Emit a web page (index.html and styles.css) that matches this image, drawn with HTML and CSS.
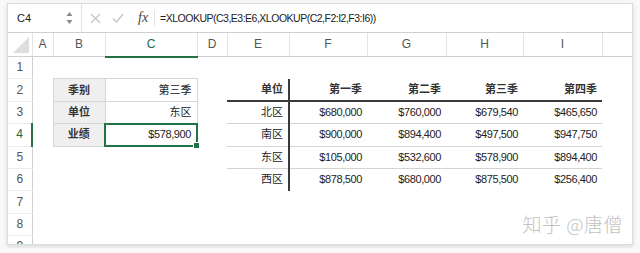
FILE: index.html
```html
<!DOCTYPE html>
<html lang="zh">
<head>
    <meta charset="UTF-8">
    <title>XLOOKUP</title>
    <link rel="stylesheet" href="styles.css">
</head>
<body>
    <div class="window">
        <!-- Formula bar -->
        <div class="formula-bar">
            <div class="name-box">
                <span>C4</span>
                <span class="stepper">
                    <svg width="7" height="14" viewBox="0 0 7 14"><path d="M3.5 1 L6.5 5 L0.5 5 Z M3.5 13 L6.5 9 L0.5 9 Z" fill="#888"/></svg>
                </span>
            </div>
            <div class="fx-buttons">
                <svg width="11" height="11" viewBox="0 0 11 11"><path d="M1 1 L10 10 M10 1 L1 10" stroke="#c4c4c4" stroke-width="1.2"/></svg>
                <svg width="12" height="10" viewBox="0 0 12 10"><path d="M1 5.5 L4.5 9 L11 1" stroke="#c4c4c4" stroke-width="1.2" fill="none"/></svg>
                <span class="fx">fx</span>
            </div>
            <div class="formula">=XLOOKUP(C3,E3:E6,XLOOKUP(C2,F2:I2,F3:I6))</div>
        </div>

        <!-- Grid -->
        <table class="sheet">
            <colgroup>
                <col style="width:24px"><col style="width:21px"><col style="width:52px"><col style="width:92px">
                <col style="width:30px"><col style="width:62px"><col style="width:78px"><col style="width:79px">
                <col style="width:77px"><col style="width:79px"><col style="width:32px">
            </colgroup>
            <thead>
                <tr>
                    <th class="corner"><span class="tri"></span></th>
                    <th>A</th><th>B</th><th class="active-col">C</th><th>D</th><th>E</th>
                    <th>F</th><th>G</th><th>H</th><th>I</th><th></th>
                </tr>
            </thead>
            <tbody>
                <tr>
                    <th>1</th>
                    <td></td><td></td><td></td><td></td><td></td><td></td><td></td><td></td><td></td><td></td>
                </tr>
                <tr>
                    <th>2</th>
                    <td></td>
                    <td class="lbl">季别</td>
                    <td class="val">第三季</td>
                    <td></td>
                    <td class="key head">单位</td>
                    <td class="head">第一季</td>
                    <td class="head">第二季</td>
                    <td class="head">第三季</td>
                    <td class="head">第四季</td>
                    <td></td>
                </tr>
                <tr>
                    <th>3</th>
                    <td></td>
                    <td class="lbl">单位</td>
                    <td class="val">东区</td>
                    <td></td>
                    <td class="key row">北区</td>
                    <td class="num row">$680,000</td>
                    <td class="num row">$760,000</td>
                    <td class="num row">$679,540</td>
                    <td class="num row">$465,650</td>
                    <td></td>
                </tr>
                <tr>
                    <th class="active-row">4</th>
                    <td></td>
                    <td class="lbl">业绩</td>
                    <td class="val num selected">$578,900<span class="handle"></span></td>
                    <td></td>
                    <td class="key row">南区</td>
                    <td class="num row">$900,000</td>
                    <td class="num row">$894,400</td>
                    <td class="num row">$497,500</td>
                    <td class="num row">$947,750</td>
                    <td></td>
                </tr>
                <tr>
                    <th>5</th>
                    <td></td><td></td><td></td><td></td>
                    <td class="key row">东区</td>
                    <td class="num row">$105,000</td>
                    <td class="num row">$532,600</td>
                    <td class="num row">$578,900</td>
                    <td class="num row">$894,400</td>
                    <td></td>
                </tr>
                <tr>
                    <th>6</th>
                    <td></td><td></td><td></td><td></td>
                    <td class="key">西区</td>
                    <td class="num">$878,500</td>
                    <td class="num">$680,000</td>
                    <td class="num">$875,500</td>
                    <td class="num">$256,400</td>
                    <td></td>
                </tr>
                <tr>
                    <th>7</th>
                    <td></td><td></td><td></td><td></td><td></td><td></td><td></td><td></td><td></td><td></td>
                </tr>
                <tr>
                    <th>8</th>
                    <td></td><td></td><td></td><td></td><td></td><td></td><td></td><td></td><td></td><td></td>
                </tr>
                <tr>
                    <th>9</th>
                    <td></td><td></td><td></td><td></td><td></td><td></td><td></td><td></td><td></td><td></td>
                </tr>
            </tbody>
        </table>

        <div class="watermark">知乎 @唐僧</div>
    </div>
</body>
</html>
```

FILE: styles.css
```css
/* Page */
body {
    margin: 0;
    padding: 3px 7px;
    background-color: #f9f9f9;
    font-family: "Liberation Sans", "Noto Sans CJK SC", sans-serif;
    color: #222;
}

.window {
    position: relative;
    width: 626px;
    height: 242px;
    box-sizing: border-box;
    background: #ffffff;
    border: 1px solid #dcdcdc;
    box-shadow: 0 2px 5px rgba(0, 0, 0, 0.12);
    overflow: hidden;
}

/* Formula bar */
.formula-bar {
    display: flex;
    align-items: center;
    height: 28px;
    border-bottom: 1px solid #cfcfcf;
    font-size: 11px;
}

.name-box {
    display: flex;
    align-items: center;
    justify-content: space-between;
    width: 74px;
    height: 100%;
    box-sizing: border-box;
    padding: 0 8px 0 9px;
    border-right: 1px solid #e2e2e2;
}

.stepper {
    display: flex;
}

.fx-buttons {
    display: flex;
    align-items: center;
    gap: 11px;
    height: 16px;
    padding: 0 6px 0 8px;
    border-right: 1px solid #e2e2e2;
}

.fx {
    font-family: "Liberation Serif", serif;
    font-style: italic;
    font-size: 14px;
    color: #444;
    margin-left: 3px;
}

.formula {
    padding-left: 5px;
    font-size: 10.5px;
    letter-spacing: -0.5px;
}

/* Sheet grid */
.sheet {
    border-collapse: collapse;
    table-layout: fixed;
    width: 626px;
    font-size: 11px;
    line-height: 13px;
}

.sheet thead th {
    height: 22.5px;
    font-weight: normal;
    color: #555;
    font-size: 12px;
    border-right: 1px solid #e4e4e4;
    border-bottom: 1px solid #cfcfcf;
    text-align: center;
    padding: 0;
}

.sheet thead th.active-col {
    color: #1f6b40;
    border-bottom: 2px solid #217346;
}

.sheet .corner {
    position: relative;
}

.tri {
    position: absolute;
    right: 3px;
    bottom: 3px;
    width: 0;
    height: 0;
    border-left: 16px solid transparent;
    border-bottom: 16px solid #dedede;
}

.sheet tbody tr {
    height: 22.4px;
}

.sheet tbody th {
    padding: 0;
    font-weight: normal;
    font-size: 12px;
    color: #555;
    text-align: center;
    border-right: 1px solid #cfcfcf;
    border-bottom: 1px solid #ececec;
}

.sheet tbody th.active-row {
    color: #1f6b40;
    border-right: 2px solid #217346;
}

.sheet td {
    padding: 0 5px;
    white-space: nowrap;
    overflow: visible;
}

/* Lookup inputs (B2:C4) */
.lbl {
    background-color: #efefef;
    border: 1px solid #d6d6d6;
    text-align: center;
    font-weight: bold;
    color: #333;
}

.val {
    border: 1px solid #d6d6d6;
    text-align: right;
}

.selected {
    position: relative;
    border: 2px solid #217346;
}

.handle {
    position: absolute;
    right: -4px;
    bottom: -4px;
    width: 5px;
    height: 5px;
    background: #217346;
    border: 1px solid #ffffff;
}

/* Data table (E2:I6) */
.head {
    text-align: right;
    font-weight: bold;
    color: #333;
    border-bottom: 2px solid #3a3a3a;
}

.key {
    text-align: right;
    border-right: 2px solid #3a3a3a;
}

.row {
    border-bottom: 1px solid #d4d4d4;
}

.num {
    text-align: right;
    letter-spacing: -0.4px;
}

.watermark {
    position: absolute;
    right: 9px;
    bottom: 7px;
    font-family: "Noto Sans CJK SC", sans-serif;
    font-size: 19px;
    font-weight: 300;
    letter-spacing: 0.5px;
    color: #c2c2c2;
}
```
